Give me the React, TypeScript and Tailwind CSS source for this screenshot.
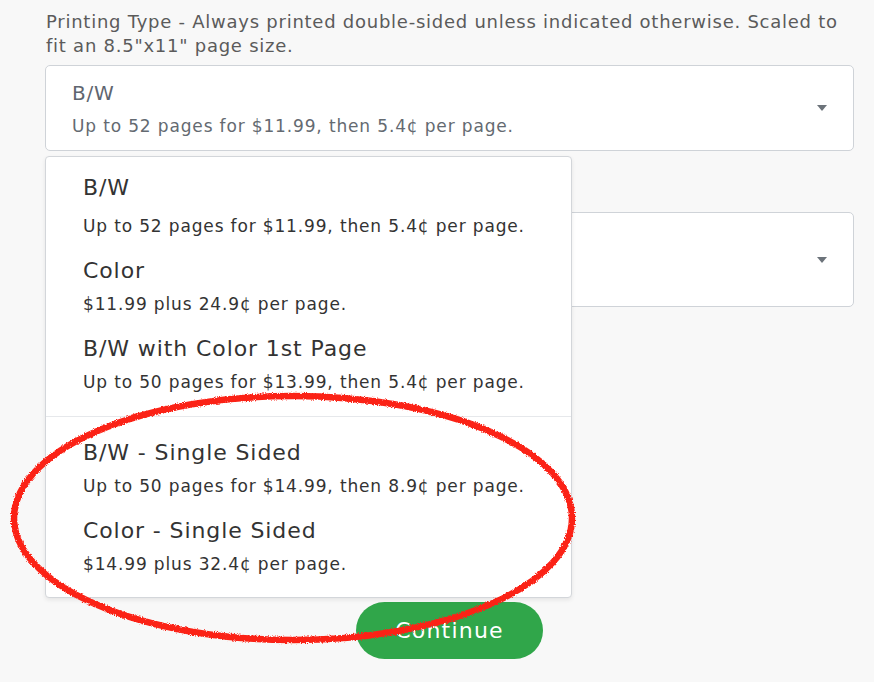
import { memo } from 'react';

interface PrintOption {
  title: string;
  detail: string;
}

const doubleSided: PrintOption[] = [
  { title: 'B/W', detail: 'Up to 52 pages for $11.99, then 5.4¢ per page.' },
  { title: 'Color', detail: '$11.99 plus 24.9¢ per page.' },
  { title: 'B/W with Color 1st Page', detail: 'Up to 50 pages for $13.99, then 5.4¢ per page.' },
];

const singleSided: PrintOption[] = [
  { title: 'B/W - Single Sided', detail: 'Up to 50 pages for $14.99, then 8.9¢ per page.' },
  { title: 'Color - Single Sided', detail: '$14.99 plus 32.4¢ per page.' },
];

const Caret = () => (
  <span className="ml-auto mr-[26px] h-0 w-0 border-x-[5px] border-t-[6px] border-x-transparent border-t-[#6c737a]" />
);

const OptionItem = memo(function OptionItem({ option, first }: { option: PrintOption; first?: boolean }) {
  return (
    <div className="py-[6px] pl-[37px] cursor-pointer">
      <div className="text-[22px] leading-[36px] tracking-[0.9px] text-[#333]">{option.title}</div>
      <div className={`text-[17px] leading-[30px] tracking-[0.85px] text-[#333] ${first ? 'mt-[5px]' : ''}`}>
        {option.detail}
      </div>
    </div>
  );
});

const Scribble = () => (
  <svg className="pointer-events-none absolute inset-0" width="874" height="682" viewBox="0 0 874 682">
    <defs>
      <filter id="rough" x="-10%" y="-10%" width="120%" height="120%">
        <feTurbulence type="fractalNoise" baseFrequency="0.9" numOctaves="2" seed="3" result="noise" />
        <feDisplacementMap in="SourceGraphic" in2="noise" scale="3.5" xChannelSelector="R" yChannelSelector="G" />
      </filter>
    </defs>
    <ellipse
      cx="293"
      cy="518"
      rx="279"
      ry="122"
      fill="none"
      stroke="#fb2418"
      strokeWidth="6.5"
      filter="url(#rough)"
    />
  </svg>
);

export default function App() {
  return (
    <div className="relative min-h-screen overflow-hidden bg-[#f8f8f8] font-['DejaVu_Sans',sans-serif]">
      <div className="ml-[45px] w-[809px] pt-[10px]">
        <p className="pl-[1px] text-[18px] leading-[24px] tracking-[0.75px] text-[#5b5b5b]">
          Printing Type - Always printed double-sided unless indicated otherwise. Scaled to fit an 8.5"x11" page size.
        </p>

        <div className="mt-[7px] flex h-[86px] items-center rounded-[5px] border border-[#cfd3d8] bg-white pl-[26px]">
          <div>
            <div className="text-[20px] leading-[30px] tracking-[0.8px] text-[#5f6670]">B/W</div>
            <div className="mt-[5px] text-[17px] leading-[26px] tracking-[0.85px] text-[#646a71]">
              Up to 52 pages for $11.99, then 5.4¢ per page.
            </div>
          </div>
          <Caret />
        </div>

        <div className="mt-[61px] flex h-[95px] items-center rounded-[5px] border border-[#cfd3d8] bg-white">
          <Caret />
        </div>

        <button className="mx-auto mt-[295px] block h-[57px] w-[187px] rounded-full bg-[#30a64a] text-[22px] tracking-[1.2px] text-white">
          Continue
        </button>
      </div>

      <div className="absolute left-[45px] top-[156px] w-[527px] rounded-[4px] border border-[#d3d6da] bg-white shadow-[0_2px_4px_rgba(0,0,0,0.08)]">
        <div className="pt-[7px] pb-[13px]">
          {doubleSided.map((o, i) => (
            <OptionItem key={o.title} option={o} first={i === 0} />
          ))}
        </div>
        <div className="h-px bg-[#e6e8eb]" />
        <div className="pt-[12px] pb-[12px]">
          {singleSided.map(o => (
            <OptionItem key={o.title} option={o} />
          ))}
        </div>
      </div>

      <Scribble />
    </div>
  );
}
